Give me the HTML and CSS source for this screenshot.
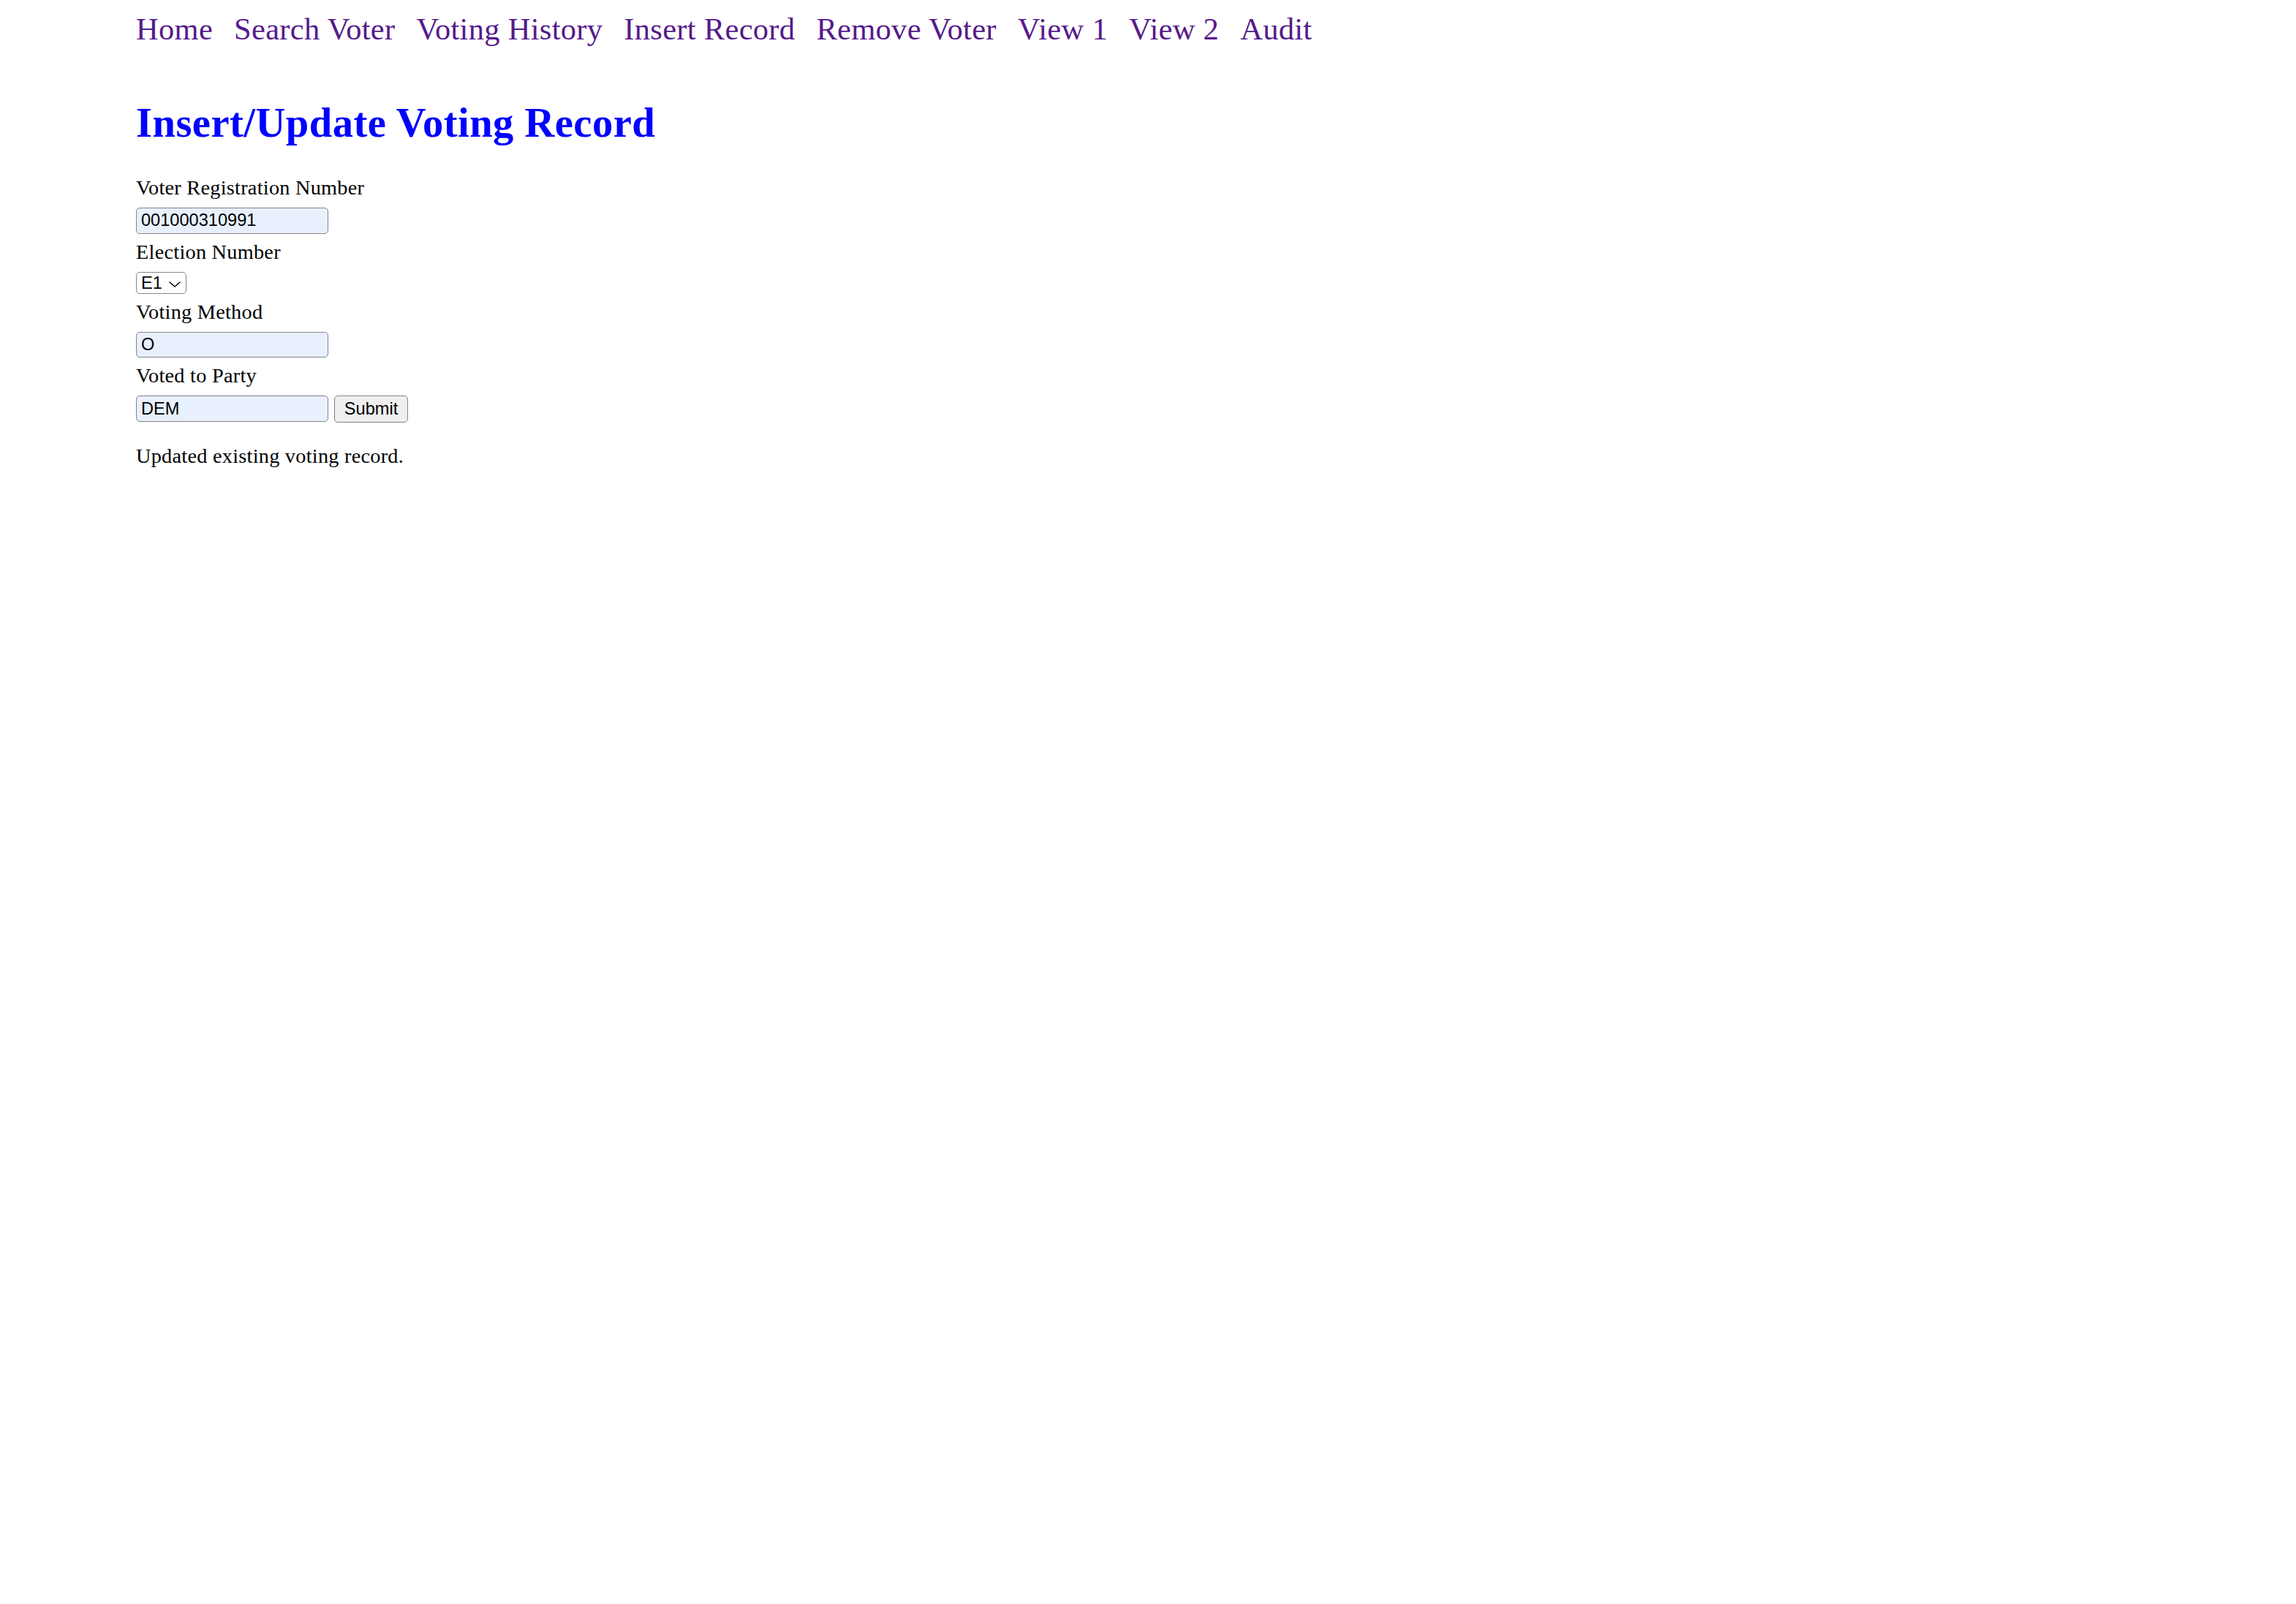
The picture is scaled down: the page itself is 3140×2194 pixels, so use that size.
FILE: index.html
```html
<!DOCTYPE html>
<html lang="en">
<head>
<meta charset="utf-8">
<title>Insert/Update Voting Record</title>
<link rel="stylesheet" href="styles.css">
</head>
<body>
<div class="page">
  <nav class="nav">
    <a href="#">Home</a>
    <a href="#">Search Voter</a>
    <a href="#">Voting History</a>
    <a href="#">Insert Record</a>
    <a href="#">Remove Voter</a>
    <a href="#">View 1</a>
    <a href="#">View 2</a>
    <a href="#">Audit</a>
  </nav>
  <h1 class="title">Insert/Update Voting Record</h1>
  <form class="form">
    <label class="label" for="reg">Voter Registration Number</label>
    <input class="field" id="reg" type="text" value="001000310991">
    <label class="label" for="elec">Election Number</label>
    <span class="select-wrap">
      <select class="select" id="elec">
        <option>E1</option>
        <option>E2</option>
      </select>
      <svg class="chevron" width="16" height="8" viewBox="0 0 16 8" aria-hidden="true"><path d="M1 1 L8 7 L15 1" fill="none" stroke="#000" stroke-width="1.6" stroke-linecap="round" stroke-linejoin="round"/></svg>
    </span>
    <label class="label" for="method">Voting Method</label>
    <input class="field" id="method" type="text" value="O">
    <label class="label" for="party">Voted to Party</label>
    <div class="row">
      <input class="field" id="party" type="text" value="DEM">
      <button class="submit" type="button">Submit</button>
    </div>
  </form>
  <p class="message">Updated existing voting record.</p>
</div>
</body>
</html>
```

FILE: styles.css
```css
html, body {
  margin: 0;
  padding: 0;
  background: #ffffff;
}

body {
  font-family: "Liberation Serif", "Times New Roman", serif;
  font-size: 28.3px;
  letter-spacing: 0.25px;
  color: #000000;
}

.page {
  padding: 15px 0 0 186px;
}

.nav {
  display: flex;
  gap: 29px;
  font-size: 42.5px;
  line-height: 50px;
  letter-spacing: 0.3px;
}

.nav a {
  color: #551a8b;
  text-decoration: none;
}

.title {
  margin: 71px 0 41px 0;
  font-size: 56.6px;
  line-height: 64px;
  font-weight: bold;
  letter-spacing: 0.45px;
  color: #0000ff;
}

.form {
  display: flex;
  flex-direction: column;
  align-items: flex-start;
  margin: 0;
}

.label {
  display: block;
  line-height: 32px;
  margin-bottom: 11px;
}

.field {
  box-sizing: border-box;
  width: 263px;
  height: 35.7px;
  margin: 0 0 9px 0;
  padding: 0 5px 0 6px;
  border: 1.6px solid #858585;
  border-radius: 5px;
  background: #e8f0fe;
  font-family: "Liberation Sans", Arial, sans-serif;
  font-size: 23.6px;
  letter-spacing: 0;
  color: #000000;
  outline: none;
}

.select-wrap {
  position: relative;
  display: inline-block;
  margin-bottom: 9px;
  line-height: 0;
}

.select {
  -webkit-appearance: none;
  appearance: none;
  box-sizing: border-box;
  width: 68.6px;
  height: 30px;
  margin: 0;
  padding: 0 0 0 6px;
  border: 1.6px solid #858585;
  border-radius: 5px;
  background: #ffffff;
  font-family: "Liberation Sans", Arial, sans-serif;
  font-size: 23.6px;
  letter-spacing: 0;
  color: #000000;
  outline: none;
}

.chevron {
  position: absolute;
  left: 45px;
  top: 13px;
  width: 16px;
  height: 8px;
  pointer-events: none;
}

.row {
  display: flex;
  align-items: flex-start;
  gap: 8px;
}

.row .field {
  margin-bottom: 0;
}

.submit {
  box-sizing: border-box;
  width: 101px;
  height: 36.5px;
  margin: 0;
  padding: 0;
  border: 1.6px solid #858585;
  border-radius: 5px;
  background: #efefef;
  font-family: "Liberation Sans", Arial, sans-serif;
  font-size: 23.6px;
  letter-spacing: 0;
  color: #000000;
}

.message {
  margin: 30px 0 0 0;
  line-height: 32px;
}
```
